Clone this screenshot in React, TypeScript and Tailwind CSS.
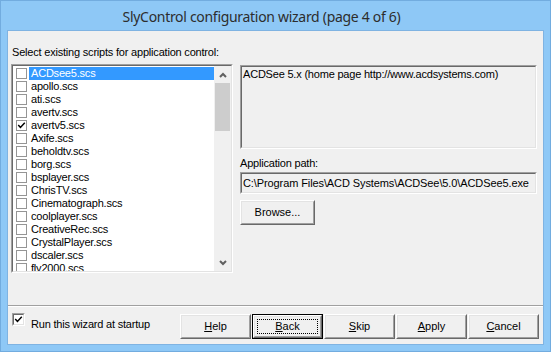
import React from "react";

const items = [
  "ACDsee5.scs",
  "apollo.scs",
  "ati.scs",
  "avertv.scs",
  "avertv5.scs",
  "Axife.scs",
  "beholdtv.scs",
  "borg.scs",
  "bsplayer.scs",
  "ChrisTV.scs",
  "Cinematograph.scs",
  "coolplayer.scs",
  "CreativeRec.scs",
  "CrystalPlayer.scs",
  "dscaler.scs",
  "fly2000.scs",
];

function Sunken({ className = "", innerClass = "", children }: { className?: string; innerClass?: string; children?: React.ReactNode }) {
  return (
    <div className={"border border-t-[#a0a0a0] border-l-[#a0a0a0] border-r-white border-b-white " + className}>
      <div className={"w-full h-full border border-t-[#696969] border-l-[#696969] border-r-[#e3e3e3] border-b-[#e3e3e3] " + innerClass}>
        {children}
      </div>
    </div>
  );
}

function Button({ children, def = false, className = "" }: { children: React.ReactNode; def?: boolean; className?: string }) {
  const raised = (
    <div className="w-full h-full border border-t-white border-l-white border-r-[#696969] border-b-[#696969]">
      <div className="w-full h-full border border-t-[#e3e3e3] border-l-[#e3e3e3] border-r-[#a0a0a0] border-b-[#a0a0a0] bg-[#f0f0f0] flex items-center justify-center p-[2px]">
        {def ? (
          <div className="w-full h-full border border-dotted border-black flex items-center justify-center">{children}</div>
        ) : (
          children
        )}
      </div>
    </div>
  );
  if (def) {
    return <div className={"border border-black " + className}>{raised}</div>;
  }
  return <div className={className}>{raised}</div>;
}

function Check({ size = 11 }: { size?: number }) {
  return (
    <svg width={size} height={size} viewBox="0 0 11 11" className="block">
      <path d="M1.5 5 L4.2 7.8 L9.5 2.2" fill="none" stroke="#000" strokeWidth="1.8" />
    </svg>
  );
}

export default function App() {
  return (
    <div className="w-[551px] h-[352px] bg-[#8ec8f6] border border-[#72acdf] flex flex-col font-['Liberation_Sans',Arial,sans-serif] text-[11px] leading-[13px] text-black overflow-hidden">
      <div className="h-[29px] flex items-center justify-center pr-[28px] pt-[1px] font-['Noto_Sans',sans-serif] text-[14px] tracking-[-0.3px] text-[#2d2d2d]">
        SlyControl configuration wizard (page 4 of 6)
      </div>
      <div className="mx-[6px] mb-[6px] flex-1 border border-[#7fb3e2] bg-[#f0f0f0] flex flex-col">
        <div className="flex-1 flex flex-col pt-[15px]">
          <div className="pl-[4px] tracking-[-0.2px]">Select existing scripts for application control:</div>
          <div className="flex mt-[5px] pl-[3px]">
            <Sunken className="w-[222px] h-[209px]" innerClass="flex bg-white overflow-hidden">
              <div className="flex-1 pt-[1px] overflow-hidden">
                {items.map((it, i) => (
                  <div key={it} className="h-[13px] flex items-center pl-[3px]">
                    <div className="w-[11px] h-[11px] border border-[#959595] bg-white flex items-center justify-center shrink-0">
                      {i === 4 && <Check size={9} />}
                    </div>
                    <div
                      className={
                        "ml-[2px] pl-[2px] h-[13px] flex-1 whitespace-nowrap tracking-[-0.2px] " +
                        (i === 0 ? "bg-[#3399ff] text-white" : "")
                      }
                    >
                      {it}
                    </div>
                  </div>
                ))}
              </div>
              <div className="w-[17px] h-full bg-[#f0f0f0] flex flex-col">
                <div className="h-[17px] flex items-center justify-center">
                  <svg width="8" height="6" viewBox="0 0 8 6">
                    <path d="M1 5 L4 2 L7 5" fill="none" stroke="#606060" strokeWidth="2" />
                  </svg>
                </div>
                <div className="h-[48px] mx-[1px] bg-[#cdcdcd]" />
                <div className="flex-1" />
                <div className="h-[17px] flex items-center justify-center">
                  <svg width="8" height="6" viewBox="0 0 8 6">
                    <path d="M1 1 L4 4 L7 1" fill="none" stroke="#606060" strokeWidth="2" />
                  </svg>
                </div>
              </div>
            </Sunken>
            <div className="ml-[7px] w-[297px] flex flex-col pt-[1px]">
              <Sunken className="h-[84px]" innerClass="bg-[#f0f0f0] pl-[1px] pt-[1px] tracking-[-0.2px]">
                ACDSee 5.x (home page http://www.acdsystems.com)
              </Sunken>
              <div className="mt-[8px] tracking-[-0.2px]">Application path:</div>
              <Sunken className="h-[22px] mt-[2px]" innerClass="bg-[#f0f0f0] pl-[1px] flex items-center tracking-[-0.1px] whitespace-nowrap overflow-hidden">
                C:\Program Files\ACD Systems\ACDSee\5.0\ACDSee5.exe
              </Sunken>
              <Button className="w-[75px] h-[25px] mt-[6px]">Browse...</Button>
            </div>
          </div>
        </div>
        <div className="h-[1px] bg-[#a0a0a0]" />
        <div className="h-[1px] bg-white" />
        <div className="flex items-start pt-[7px] pb-[5px] pl-[4px] pr-[4px]">
          <div className="flex items-start">
            <Sunken className="w-[13px] h-[13px] mt-[-1px] shrink-0" innerClass="bg-white flex items-center justify-center overflow-hidden">
              <Check size={9} />
            </Sunken>
            <div className="ml-[6px] mt-[4px] tracking-[-0.2px]">Run this wizard at startup</div>
          </div>
          <div className="ml-auto flex gap-[1px]">
            <Button className="w-[71px] h-[25px]"><span><span className="underline">H</span>elp</span></Button>
            <Button def className="w-[71px] h-[25px]"><span><span className="underline">B</span>ack</span></Button>
            <Button className="w-[71px] h-[25px]"><span><span className="underline">S</span>kip</span></Button>
            <Button className="w-[71px] h-[25px]"><span><span className="underline">A</span>pply</span></Button>
            <Button className="w-[71px] h-[25px]"><span><span className="underline">C</span>ancel</span></Button>
          </div>
        </div>
      </div>
    </div>
  );
}
